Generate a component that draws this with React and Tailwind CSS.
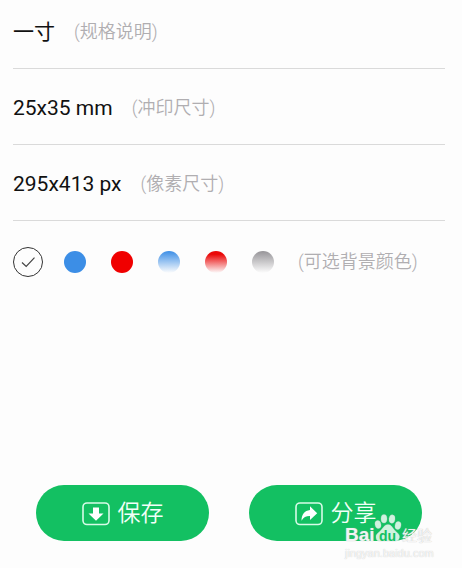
import { useState } from "react";

const specs = [
  { value: "一寸", note: "(规格说明)" },
  { value: "25x35 mm", note: "(冲印尺寸)" },
  { value: "295x413 px", note: "(像素尺寸)" },
];

const swatches = [
  { id: "blue", label: "蓝色", fill: "bg-[#3c8ee6]" },
  { id: "red", label: "红色", fill: "bg-[#f00000]" },
  { id: "blue-fade", label: "蓝色渐变", fill: "bg-linear-to-b/srgb from-[#3c8ee6] to-[#fdfdfd]" },
  { id: "red-fade", label: "红色渐变", fill: "bg-linear-to-b/srgb from-[#ea0808] from-15% to-[#fdfdfd]" },
  { id: "gray-fade", label: "灰色渐变", fill: "bg-linear-to-b/srgb from-[#969498] to-[#fdfdfd]" },
];

function SaveIcon() {
  return (
    <svg width="28" height="24" viewBox="0 0 28 24" fill="none" aria-hidden="true">
      <rect x="1" y="1" width="26" height="21.500" rx="4" stroke="#d8fbe8" strokeWidth="1.600" />
      <path d="M11 5.500h6v6h4.500L14 18.800 6.500 11.500H11z" fill="#fff" />
    </svg>
  );
}

function ShareIcon() {
  return (
    <svg width="28" height="24" viewBox="0 0 28 24" fill="none" aria-hidden="true">
      <rect x="1" y="1" width="26" height="21.500" rx="4" stroke="#d8fbe8" strokeWidth="1.600" />
      <path d="M15 4.300l7.200 7L15 18v-3.900c-3.800-.1-6.400 1.200-8.500 4.700.1-6 3-10 8.500-10.700z" fill="#fff" />
    </svg>
  );
}

function ActionButton({ icon, children }) {
  return (
    <button
      type="button"
      className="flex h-14 flex-1 items-center justify-center gap-2 rounded-full bg-[#13c062] pt-[2px] text-[23px] leading-8 font-[350] text-[#f2fff8]"
    >
      {icon}
      {children}
    </button>
  );
}

function Watermark() {
  return (
    <div className="pointer-events-none absolute top-[29px] right-[28px] w-[89px] text-white/85">
      <svg className="absolute top-0 left-[29px]" width="28" height="28" viewBox="0 0 28 28" aria-hidden="true">
        <g fill="#fff" fillOpacity=".8" stroke="#cccccc" strokeOpacity=".6" strokeWidth=".5">
          <ellipse cx="4" cy="10.500" rx="3" ry="4" transform="rotate(-12 4 10.500)" />
          <ellipse cx="10" cy="4.800" rx="3" ry="4.200" />
          <ellipse cx="18" cy="5" rx="3" ry="4.200" transform="rotate(8 18 5)" />
          <ellipse cx="24" cy="11.500" rx="3" ry="4" transform="rotate(12 24 11.500)" />
          <path d="M14 10.500c3.500 0 4.500 3.500 7 6s5 4 4.500 7-3 3.800-5.500 3.700-8-.2-12 0S2.300 27 2 23.500s2-4.500 4.600-7 3.900-6 7.400-6z" />
        </g>
      </svg>
      <div className="relative flex items-baseline pt-[11px] font-['Liberation_Sans','Noto_Sans_CJK_SC',sans-serif] leading-5 [text-shadow:0_0_1px_#b0b0b0]">
        <span className="w-[34px] text-[19px] font-bold">Bai</span>
        <span className="w-[23px] text-[14px] font-bold text-[#13c062] [text-shadow:none]">du</span>
        <span className="text-[15px]">经验</span>
      </div>
      <div className="font-['Liberation_Sans',sans-serif] text-[11px] leading-[14px] whitespace-nowrap [text-shadow:0_0_1px_#b8b8b8]">
        jingyan.baidu.com
      </div>
    </div>
  );
}

export default function App() {
  const [color, setColor] = useState("white");

  return (
    <main className="flex min-h-screen flex-col bg-[#fdfdfd] pt-[18px] font-[Roboto,'Noto_Sans_CJK_SC',sans-serif]">
      <dl className="flex flex-col gap-[25px] pr-[17px] pl-[13px]">
        {specs.map((spec) => (
          <div key={spec.value} className="flex items-center gap-[19px] border-b border-[#dadada] pb-[22px] leading-7">
            <dt className="text-[21px] text-[#111]">{spec.value}</dt>
            <dd className="text-[18px] font-[350] text-[#b0aeb1]">{spec.note}</dd>
          </div>
        ))}
      </dl>

      <fieldset className="flex items-center pt-[26px] pl-[13px]">
        <label className="relative mr-[21px] block size-[30px]">
          <input
            type="radio"
            name="background"
            aria-label="白色"
            checked={color === "white"}
            onChange={() => setColor("white")}
            className="block size-[30px] appearance-none rounded-full border border-[#333]"
          />
          {color === "white" && (
            <svg className="pointer-events-none absolute inset-0" width="30" height="30" viewBox="0 0 30 30" fill="none" aria-hidden="true">
              <path d="M9 15.500l4.200 4 8.300-8.800" stroke="#444" strokeWidth="1.200" />
            </svg>
          )}
        </label>
        <div className="flex gap-[25px]">
          {swatches.map((swatch) => (
            <input
              key={swatch.id}
              type="radio"
              name="background"
              aria-label={swatch.label}
              checked={color === swatch.id}
              onChange={() => setColor(swatch.id)}
              className={`block size-[22px] appearance-none rounded-full ${swatch.fill}`}
            />
          ))}
        </div>
        <span className="ml-6 text-[18px] leading-7 font-[350] text-[#b0aeb1]">(可选背景颜色)</span>
      </fieldset>

      <footer className="relative mt-auto flex gap-10 pr-10 pb-[27px] pl-9">
        <ActionButton icon={<SaveIcon />}>保存</ActionButton>
        <ActionButton icon={<ShareIcon />}>分享</ActionButton>
        <Watermark />
      </footer>
    </main>
  );
}
